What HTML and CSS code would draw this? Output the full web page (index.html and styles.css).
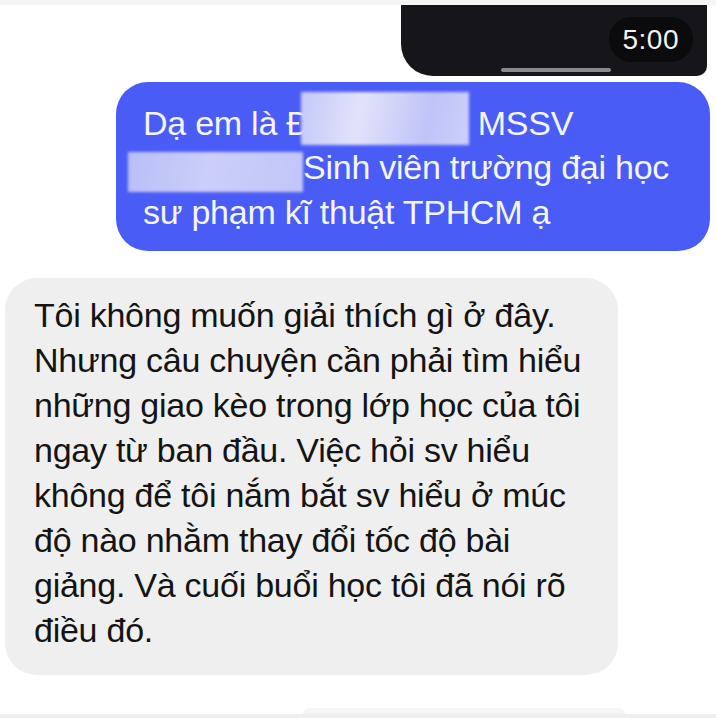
FILE: index.html
```html
<!DOCTYPE html>
<html lang="vi">
<head>
    <meta charset="UTF-8">
    <meta name="viewport" content="width=device-width, initial-scale=1.0">
    <title>Tin nhắn</title>
    <link rel="stylesheet" href="styles.css">
</head>
<body>
    <div class="top-strip"></div>

    <div class="video-bar">
        <span class="timer">5:00</span>
        <span class="home-line"></span>
    </div>

    <div class="chat">
        <div class="bubble sent">
            Dạ em là Đ<span class="redact redact-name"></span> MSSV<br>
            <span class="redact redact-id"></span>Sinh viên trường đại học<br>
            sư phạm kĩ thuật TPHCM ạ
        </div>

        <div class="bubble received">
            Tôi không muốn giải thích gì ở đây.<br>
            Nhưng câu chuyện cần phải tìm hiểu<br>
            những giao kèo trong lớp học của tôi<br>
            ngay từ ban đầu. Việc hỏi sv hiểu<br>
            không để tôi nắm bắt sv hiểu ở múc<br>
            độ nào nhằm thay đổi tốc độ bài<br>
            giảng. Và cuối buổi học tôi đã nói rõ<br>
            điều đó.
        </div>
    </div>

    <div class="bottom">
        <div class="bubble-peek"></div>
    </div>
</body>
</html>
```

FILE: styles.css
```css
* {
    margin: 0;
    padding: 0;
    box-sizing: border-box;
}

body {
    width: 716px;
    height: 718px;
    overflow: hidden;
    background: #FFFFFF;
    font-family: 'Liberation Sans', Arial, sans-serif;
    display: flex;
    flex-direction: column;
}

.top-strip {
    height: 5px;
    background: #F5F5F5;
}

.video-bar {
    align-self: flex-end;
    width: 306px;
    height: 71px;
    margin-right: 9px;
    background: #16161A;
    border-radius: 0 0 10px 32px;
    display: flex;
    flex-direction: column;
    align-items: flex-end;
    padding: 12px 14px 0 0;
}

.timer {
    background: #0B0B0D;
    color: #F2F2F2;
    font-size: 28px;
    line-height: 31px;
    letter-spacing: 0.5px;
    padding: 7px 14px;
    border-radius: 22px;
}

.home-line {
    align-self: flex-start;
    width: 110px;
    height: 4px;
    margin: 6px 0 0 100px;
    background: #8A8A90;
    border-radius: 2px;
}

.chat {
    display: flex;
    flex-direction: column;
    gap: 27px;
    padding-top: 6px;
}

.bubble {
    font-size: 34px;
    letter-spacing: -0.25px;
}

.sent {
    align-self: flex-end;
    width: 594px;
    margin-right: 6px;
    background: #4A5CF6;
    color: #F4F5FF;
    border-radius: 32px;
    line-height: 44px;
    padding: 19px 20px 17px 27px;
}

.redact {
    display: inline-block;
    background: linear-gradient(100deg, #C4C8F8 0%, #E2E3FA 35%, #BFC3F7 75%, #CDD0F9 100%);
    filter: blur(1.5px);
}

.redact-name {
    width: 168px;
    height: 53px;
    margin: -9px 0 0 -10px;
    vertical-align: -10px;
}

.redact-id {
    width: 175px;
    height: 40px;
    margin: 0 0 -2px -15px;
    vertical-align: -11px;
    background: linear-gradient(100deg, #B9BEF6 0%, #CBCEF8 45%, #C2C6F8 100%);
}

.received {
    align-self: flex-start;
    width: 613px;
    margin-left: 5px;
    background: #EFEFEF;
    color: #141414;
    border-radius: 32px;
    line-height: 45px;
    padding: 15px 20px 22px 29px;
}

.bottom {
    margin-top: auto;
    height: 10px;
    background: #EEEEEE;
    border-top: 6px solid #FFFFFF;
    display: flex;
    padding-left: 303px;
}

.bubble-peek {
    width: 322px;
    height: 6px;
    margin-top: -6px;
    background: #F6F6F6;
    border-radius: 12px 12px 0 0;
}
```
